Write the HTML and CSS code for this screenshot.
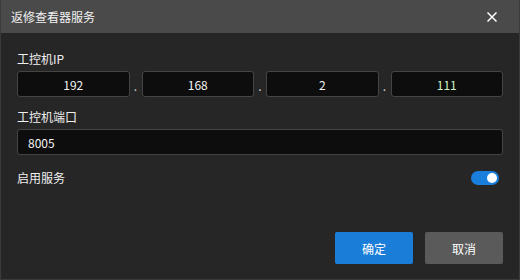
FILE: index.html
```html
<!DOCTYPE html>
<html lang="zh-CN">
<head>
  <meta charset="UTF-8">
  <title>返修查看器服务</title>
  <link rel="stylesheet" href="styles.css">
</head>
<body>
  <div class="dialog">
    <div class="titlebar">
      <span class="title">返修查看器服务</span>
      <button class="close-btn" aria-label="关闭">
        <svg width="10" height="10" viewBox="0 0 10 10">
          <path d="M1 1 L9 9 M9 1 L1 9" stroke="#fff" stroke-width="1.5" stroke-linecap="square" />
        </svg>
      </button>
    </div>
    <div class="content">
      <div class="field-label">工控机IP</div>
      <div class="ip-row">
        <input class="text-input center" value="192">
        <span class="ip-dot">.</span>
        <input class="text-input center" value="168">
        <span class="ip-dot">.</span>
        <input class="text-input center" value="2">
        <span class="ip-dot">.</span>
        <input class="text-input center active" value="111">
      </div>
      <div class="field-label second">工控机端口</div>
      <input class="text-input wide" value="8005">
      <div class="switch-row">
        <span class="switch-label">启用服务</span>
        <span class="switch on"><span class="knob"></span></span>
      </div>
      <div class="actions">
        <button class="btn primary">确定</button>
        <button class="btn secondary">取消</button>
      </div>
    </div>
  </div>
</body>
</html>
```

FILE: styles.css
```css
html, body {
  margin: 0;
  padding: 0;
  background: #262626;
  font-family: "Noto Sans CJK SC", "Noto Sans", sans-serif;
  font-size: 12px;
  color: #fff;
}
.dialog {
  width: 520px;
  height: 280px;
  box-sizing: border-box;
  border: 1px solid #3a3a3a;
  border-top: none;
  background: #262626;
  display: flex;
  flex-direction: column;
}
.titlebar {
  height: 33px;
  background: #4a4a4a;
  display: flex;
  align-items: center;
  justify-content: space-between;
  padding: 0 0 0 10px;
  flex-shrink: 0;
}
.title {
  font-size: 12px;
  color: #f2f2f2;
  line-height: 1;
}
.close-btn {
  width: 30px;
  height: 30px;
  margin-right: 12px;
  border: none;
  background: transparent;
  display: flex;
  align-items: center;
  justify-content: center;
  padding: 0;
  cursor: pointer;
}
.content {
  flex: 1;
  display: flex;
  flex-direction: column;
  padding: 17px 16px 0 16px;
}
.field-label {
  height: 18px;
  line-height: 18px;
  color: #f0f0f0;
  margin-bottom: 3px;
}
.field-label.second {
  margin-top: 11px;
  margin-bottom: 3px;
}
.ip-row {
  display: grid;
  grid-template-columns: 1fr 12px 1fr 12px 1fr 12px 1fr;
  width: 486px;
  height: 26px;
}
.ip-dot {
  text-align: center;
  line-height: 26px;
  padding-top: 2px;
  height: 24px;
  color: #d0d0d0;
  font-size: 12px;
}
.text-input {
  height: 26px;
  box-sizing: border-box;
  background: #0d0d0d;
  border: 1px solid #444;
  border-radius: 3px;
  color: #f2f2f2;
  font-family: "Noto Sans CJK SC", "Noto Sans", sans-serif;
  font-size: 12px;
  padding: 0 10px;
  outline: none;
  min-width: 0;
}
.text-input.center {
  text-align: center;
}
.text-input.active {
  color: #c9f5c4;
}
.text-input.wide {
  width: 486px;
}
.switch-row {
  display: flex;
  align-items: center;
  justify-content: space-between;
  width: 482px;
  margin-top: 14px;
  height: 18px;
}
.switch-label {
  color: #f0f0f0;
  line-height: 18px;
}
.switch {
  width: 28px;
  height: 14px;
  border-radius: 7px;
  background: #1a7fdc;
  display: flex;
  align-items: center;
  justify-content: flex-end;
  padding: 0 2px;
  box-sizing: border-box;
}
.knob {
  width: 10px;
  height: 10px;
  border-radius: 50%;
  background: #fff;
}
.actions {
  display: flex;
  justify-content: flex-end;
  gap: 12px;
  width: 486px;
  margin-top: 45px;
}
.btn {
  width: 78px;
  height: 32px;
  border: none;
  border-radius: 2px;
  color: #fff;
  font-family: "Noto Sans CJK SC", "Noto Sans", sans-serif;
  font-size: 12px;
  cursor: pointer;
}
.btn.primary {
  background: #1a7ed9;
}
.btn.secondary {
  background: #5a5a5a;
}
```
